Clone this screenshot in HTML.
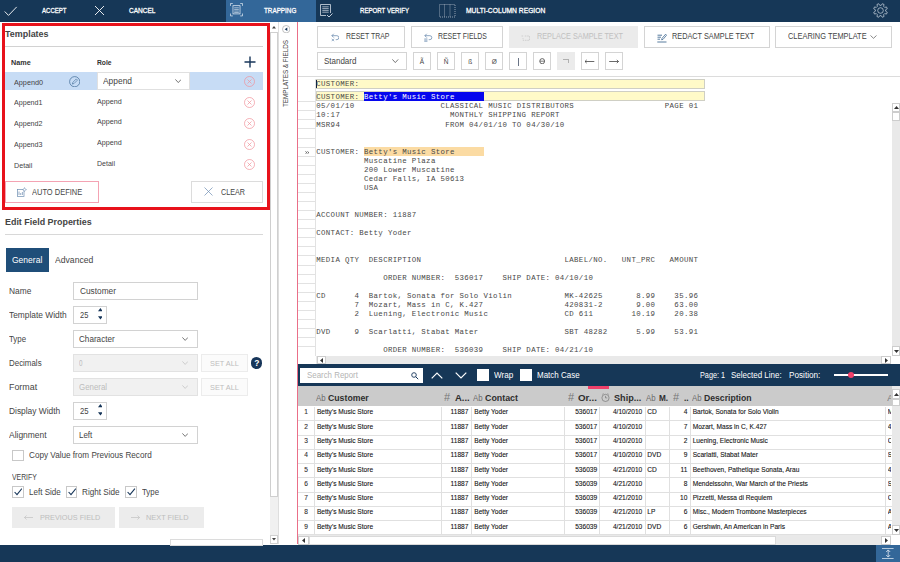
<!DOCTYPE html>
<html>
<head>
<meta charset="utf-8">
<style>
*{box-sizing:border-box;margin:0;padding:0}
html,body{width:900px;height:562px;overflow:hidden;background:#fff}
body{font-family:"Liberation Sans",sans-serif;font-size:9px;color:#333;position:relative}
.a{position:absolute}
.t{position:absolute;white-space:nowrap;line-height:1}
.btn{position:absolute;border:1px solid #d4d4d4;background:#fff}
.mono{font-family:"Liberation Mono",monospace;font-size:8px;color:#222;white-space:pre;line-height:1;position:absolute}
.cell{position:absolute;font-size:6.6px;color:#111;white-space:nowrap;line-height:1;-webkit-text-stroke:0.1px #222}
</style>
</head>
<body>
<div class="a" style="left:0px;top:0px;width:900px;height:21.6px;background:#163757;"></div>
<div class="a" style="left:226px;top:0px;width:90px;height:21.6px;background:#336799;"></div>
<svg class="a" style="left:4px;top:5.5px" width="14" height="10.5" viewBox="0 0 14 10.5"><path d="M0.7 5.5L4.5 9.4L12.7 0.9" stroke="#fff" stroke-width="0.9" fill="none"/></svg>
<div class="t" style="left:42.0px;top:7px;font-size:7.5px;color:#fff;transform:scaleX(0.8053);transform-origin:0 0;-webkit-text-stroke:0.3px #fff;">ACCEPT</div>
<svg class="a" style="left:94px;top:5px" width="11" height="11" viewBox="0 0 11 11"><path d="M1 1L10 10M10 1L1 10" stroke="#fff" stroke-width="0.9" fill="none"/></svg>
<div class="t" style="left:129.0px;top:7px;font-size:7.5px;color:#fff;transform:scaleX(0.8710);transform-origin:0 0;-webkit-text-stroke:0.3px #fff;">CANCEL</div>
<svg class="a" style="left:230px;top:3.3px" width="13" height="13.4" viewBox="0 0 14 14" preserveAspectRatio="none"><path d="M0.5 3V0.5H3M11 0.5H13.5V3M13.5 11V13.5H11M3 13.5H0.5V11" stroke="#dfe8f2" stroke-width="0.8" fill="none"/><rect x="3.2" y="2.8" width="7.6" height="8.6" stroke="#dfe8f2" stroke-width="0.8" fill="none"/><path d="M4.5 5H9.5M4.5 6.7H9.5M4.5 8.4H9.5M4.5 10H9.5" stroke="#dfe8f2" stroke-width="0.7"/></svg>
<div class="t" style="left:264.0px;top:7px;font-size:7.5px;color:#fff;transform:scaleX(0.8425);transform-origin:0 0;-webkit-text-stroke:0.3px #fff;">TRAPPING</div>
<svg class="a" style="left:320px;top:3.5px" width="13" height="14" viewBox="0 0 13 14"><path d="M0.5 0.5H10.5V9M0.5 0.5V11.5H6" stroke="#d5dde6" stroke-width="0.8" fill="none"/><path d="M2.3 2.8H8.7M2.3 4.6H8.7M2.3 6.4H8.7M2.3 8.2H8.7" stroke="#d5dde6" stroke-width="0.7"/><path d="M7 11L9 13L12.5 9.5" stroke="#d5dde6" stroke-width="0.9" fill="none"/></svg>
<div class="t" style="left:360.0px;top:7px;font-size:7.5px;color:#fff;transform:scaleX(0.8146);transform-origin:0 0;-webkit-text-stroke:0.3px #fff;">REPORT VERIFY</div>
<svg class="a" style="left:439px;top:3.5px" width="17" height="14" viewBox="0 0 17 14"><rect x="0.5" y="0.5" width="15.5" height="12.5" stroke="#aeb9c6" stroke-width="0.8" fill="none" stroke-dasharray="1 1"/><path d="M5.5 0.5V13M11 0.5V13" stroke="#aeb9c6" stroke-width="0.8" stroke-dasharray="1 1"/></svg>
<div class="t" style="left:465.7px;top:7px;font-size:7.5px;color:#fff;transform:scaleX(0.8949);transform-origin:0 0;-webkit-text-stroke:0.3px #fff;">MULTI-COLUMN REGION</div>
<svg class="a" style="left:873.2px;top:2.5px" width="15" height="15" viewBox="0 0 15 15"><polygon points="8.23,2.35 9.24,0.72 11.06,1.47 10.62,3.34 11.66,4.38 13.53,3.94 14.28,5.76 12.65,6.77 12.65,8.23 14.28,9.24 13.53,11.06 11.66,10.62 10.62,11.66 11.06,13.53 9.24,14.28 8.23,12.65 6.77,12.65 5.76,14.28 3.94,13.53 4.38,11.66 3.34,10.62 1.47,11.06 0.72,9.24 2.35,8.23 2.35,6.77 0.72,5.76 1.47,3.94 3.34,4.38 4.38,3.34 3.94,1.47 5.76,0.72 6.77,2.35" stroke="#cfd8e2" stroke-width="0.7" fill="none" stroke-linejoin="round"/><circle cx="7.5" cy="7.5" r="2.8" stroke="#cfd8e2" stroke-width="0.7" fill="none"/></svg>
<div class="a" style="left:0px;top:544.6px;width:900px;height:17.4px;background:#163757;"></div>
<div class="a" style="left:876.2px;top:544.6px;width:23.8px;height:17.4px;background:#336799;"></div>
<svg class="a" style="left:882.2px;top:548px" width="11.6" height="11" viewBox="0 0 11.6 11"><path d="M0 0.45H11.6M0 10.55H11.6M6.2 2V9M4.2 4L6.2 1.9L8.2 4M4.2 7L6.2 9.1L8.2 7" stroke="#dfe8f2" stroke-width="0.8" fill="none"/></svg>
<div class="a" style="left:2.3px;top:23px;width:267.7px;height:186.7px;border:3px solid #e8121b;"></div>
<div class="t" style="left:5.0px;top:30px;font-size:9px;color:#444;font-weight:bold;transform:scaleX(0.9920);transform-origin:0 0;">Templates</div>
<div class="a" style="left:5px;top:45.5px;width:258px;height:1px;background:#d2d2d2;"></div>
<div class="t" style="left:11.0px;top:59px;font-size:8px;color:#333;font-weight:bold;transform:scaleX(0.9041);transform-origin:0 0;">Name</div>
<div class="t" style="left:97.0px;top:59px;font-size:8px;color:#333;font-weight:bold;transform:scaleX(0.8364);transform-origin:0 0;">Role</div>
<svg class="a" style="left:243.5px;top:55.5px" width="12" height="12" viewBox="0 0 12 12"><path d="M6 0.5V11.5M0.5 6H11.5" stroke="#17365a" stroke-width="1.4"/></svg>
<div class="a" style="left:5px;top:72px;width:258px;height:18px;background:#c7dcf5;"></div>
<div class="t" style="left:14.0px;top:79px;font-size:8px;color:#444;transform:scaleX(0.9053);transform-origin:0 0;">Append0</div>
<svg class="a" style="left:69px;top:76px" width="11.4" height="11.4" viewBox="0 0 11.4 11.4"><circle cx="5.7" cy="5.7" r="5.1" stroke="#3c6894" stroke-width="0.7" fill="none"/><path d="M3.3 8.1L3.9 6.3L7.3 2.9L8.5 4.1L5.1 7.5z" stroke="#3c6894" stroke-width="0.6" fill="none"/></svg>
<div class="a" style="left:97px;top:72px;width:92.5px;height:18px;background:#fff;border:1px solid #e0e0e0;"></div>
<div class="t" style="left:103.0px;top:77px;font-size:9px;color:#444;transform:scaleX(0.9345);transform-origin:0 0;">Append</div>
<svg class="a" style="left:174.6px;top:79.2px" width="6.6" height="4.2" viewBox="0 0 6.6 4.2"><path d="M0.4 0.4L3.3 3.6L6.2 0.4" stroke="#555" stroke-width="0.8" fill="none"/></svg>
<div class="t" style="left:14.0px;top:99px;font-size:8px;color:#444;transform:scaleX(0.8897);transform-origin:0 0;">Append1</div>
<div class="t" style="left:97.0px;top:98px;font-size:8px;color:#444;transform:scaleX(0.8955);transform-origin:0 0;">Append</div>
<div class="t" style="left:14.0px;top:120px;font-size:8px;color:#444;transform:scaleX(0.8897);transform-origin:0 0;">Append2</div>
<div class="t" style="left:97.0px;top:118px;font-size:8px;color:#444;transform:scaleX(0.8955);transform-origin:0 0;">Append</div>
<div class="t" style="left:14.0px;top:141px;font-size:8px;color:#444;transform:scaleX(0.8897);transform-origin:0 0;">Append3</div>
<div class="t" style="left:97.0px;top:139px;font-size:8px;color:#444;transform:scaleX(0.8955);transform-origin:0 0;">Append</div>
<div class="t" style="left:14.0px;top:162px;font-size:8px;color:#444;transform:scaleX(0.8947);transform-origin:0 0;">Detail</div>
<div class="t" style="left:97.0px;top:160px;font-size:8px;color:#444;transform:scaleX(0.8800);transform-origin:0 0;">Detail</div>
<svg class="a" style="left:244px;top:76px" width="11" height="11" viewBox="0 0 11 11"><circle cx="5.5" cy="5.5" r="5" stroke="#f0909a" stroke-width="0.7" fill="none"/><path d="M3.5 3.5L7.5 7.5M7.5 3.5L3.5 7.5" stroke="#f0909a" stroke-width="0.7"/></svg>
<svg class="a" style="left:244px;top:97px" width="11" height="11" viewBox="0 0 11 11"><circle cx="5.5" cy="5.5" r="5" stroke="#f0909a" stroke-width="0.7" fill="none"/><path d="M3.5 3.5L7.5 7.5M7.5 3.5L3.5 7.5" stroke="#f0909a" stroke-width="0.7"/></svg>
<svg class="a" style="left:244px;top:118px" width="11" height="11" viewBox="0 0 11 11"><circle cx="5.5" cy="5.5" r="5" stroke="#f0909a" stroke-width="0.7" fill="none"/><path d="M3.5 3.5L7.5 7.5M7.5 3.5L3.5 7.5" stroke="#f0909a" stroke-width="0.7"/></svg>
<svg class="a" style="left:244px;top:139px" width="11" height="11" viewBox="0 0 11 11"><circle cx="5.5" cy="5.5" r="5" stroke="#f0909a" stroke-width="0.7" fill="none"/><path d="M3.5 3.5L7.5 7.5M7.5 3.5L3.5 7.5" stroke="#f0909a" stroke-width="0.7"/></svg>
<svg class="a" style="left:244px;top:159px" width="11" height="11" viewBox="0 0 11 11"><circle cx="5.5" cy="5.5" r="5" stroke="#f0909a" stroke-width="0.7" fill="none"/><path d="M3.5 3.5L7.5 7.5M7.5 3.5L3.5 7.5" stroke="#f0909a" stroke-width="0.7"/></svg>
<div class="a" style="left:5px;top:181.2px;width:93.6px;height:21.4px;background:#fff;border:1px solid #f4a3b3;"></div>
<svg class="a" style="left:16.8px;top:187px" width="10" height="10" viewBox="0 0 10 10"><rect x="0.5" y="2.5" width="6.5" height="7" stroke="#6d8db1" stroke-width="0.7" fill="none"/><path d="M2 4.5V8M3.7 6V8M5.4 5V8" stroke="#6d8db1" stroke-width="0.7"/><path d="M7.5 0.5L8.1 2L9.6 2.6L8.1 3.2L7.5 4.7L6.9 3.2L5.4 2.6L6.9 2z" stroke="#6d8db1" stroke-width="0.5" fill="#fff"/></svg>
<div class="t" style="left:32.3px;top:188px;font-size:8.5px;color:#444;transform:scaleX(0.8808);transform-origin:0 0;">AUTO DEFINE</div>
<div class="a" style="left:191px;top:181.2px;width:72px;height:21.4px;background:#fff;border:1px solid #dcdcdc;"></div>
<svg class="a" style="left:204px;top:187px" width="9" height="9" viewBox="0 0 9 9"><path d="M0.5 0.5L8.5 8.5M8.5 0.5L0.5 8.5" stroke="#6d8db1" stroke-width="0.7"/></svg>
<div class="t" style="left:221.3px;top:188px;font-size:8.5px;color:#444;transform:scaleX(0.8467);transform-origin:0 0;">CLEAR</div>
<div class="t" style="left:5.0px;top:218px;font-size:9px;color:#444;font-weight:bold;transform:scaleX(0.9906);transform-origin:0 0;">Edit Field Properties</div>
<div class="a" style="left:5px;top:233.8px;width:258px;height:1px;background:#d8d8d8;"></div>
<div class="a" style="left:6px;top:248.2px;width:42.5px;height:23.5px;background:#1f4e79;"></div>
<div class="t" style="left:12.0px;top:256px;font-size:8.5px;color:#fff;transform:scaleX(1.0020);transform-origin:0 0;">General</div>
<div class="t" style="left:54.7px;top:256px;font-size:8.5px;color:#444;transform:scaleX(1.0130);transform-origin:0 0;">Advanced</div>
<div class="t" style="left:9.0px;top:287px;font-size:8.5px;color:#444;transform:scaleX(0.9835);transform-origin:0 0;">Name</div>
<div class="a" style="left:73px;top:282.2px;width:124.7px;height:17.6px;background:#fff;border:1px solid #d2d2d2;"></div>
<div class="t" style="left:79.7px;top:287px;font-size:8.5px;color:#444;transform:scaleX(0.9771);transform-origin:0 0;">Customer</div>
<div class="t" style="left:9.0px;top:311px;font-size:8.5px;color:#444;transform:scaleX(0.9850);transform-origin:0 0;">Template Width</div>
<div class="a" style="left:73px;top:306.2px;width:33.7px;height:17.6px;background:#fff;border:1px solid #d2d2d2;"></div>
<div class="t" style="left:80.0px;top:311px;font-size:8.5px;color:#444;transform:scaleX(0.8778);transform-origin:0 0;">25</div>
<svg class="a" style="left:97.7px;top:308.4px" width="4.8" height="11.6" viewBox="0 0 4.8 11.6"><path d="M0 3.3L2.4 0L4.8 3.3zM0 8.3L2.4 11.6L4.8 8.3z" fill="#17365a"/></svg>
<div class="t" style="left:9.0px;top:335px;font-size:8.5px;color:#444;transform:scaleX(0.9225);transform-origin:0 0;">Type</div>
<div class="a" style="left:73px;top:330.2px;width:124.7px;height:17.6px;background:#fff;border:1px solid #d2d2d2;"></div>
<div class="t" style="left:79.0px;top:335px;font-size:8.5px;color:#444;transform:scaleX(0.9565);transform-origin:0 0;">Character</div>
<svg class="a" style="left:181.9px;top:337.4px" width="6.4" height="4" viewBox="0 0 6.4 4"><path d="M0.4 0.4L3.2 3.4L6 0.4" stroke="#555" stroke-width="0.8" fill="none"/></svg>
<div class="t" style="left:9.1px;top:359px;font-size:8.5px;color:#444;transform:scaleX(0.9327);transform-origin:0 0;">Decimals</div>
<div class="a" style="left:73px;top:354.1px;width:124.7px;height:17.6px;background:#f1f1f1;border:1px solid #e2e2e2;"></div>
<div class="t" style="left:79.3px;top:359px;font-size:8.5px;color:#bdbdbd;transform:scaleX(0.7404);transform-origin:0 0;">0</div>
<svg class="a" style="left:181.9px;top:361.4px" width="6.4" height="4" viewBox="0 0 6.4 4"><path d="M0.4 0.4L3.2 3.4L6 0.4" stroke="#c4c4c4" stroke-width="0.8" fill="none"/></svg>
<div class="a" style="left:200.8px;top:354.1px;width:47.2px;height:17.6px;background:#fbfbfb;border:1px solid #ececec;"></div>
<div class="t" style="left:210.0px;top:360px;font-size:8px;color:#bdbdbd;transform:scaleX(0.9163);transform-origin:0 0;">SET ALL</div>
<div class="a" style="left:250.8px;top:357px;width:11.6px;height:11.6px;background:#17365a;border-radius:6px"></div>
<div class="t" style="left:254.2px;top:359px;font-size:8.5px;color:#fff;font-weight:bold;">?</div>
<div class="t" style="left:9.1px;top:383px;font-size:8.5px;color:#444;transform:scaleX(1.0438);transform-origin:0 0;">Format</div>
<div class="a" style="left:73px;top:378.1px;width:124.7px;height:17.6px;background:#f1f1f1;border:1px solid #e2e2e2;"></div>
<div class="t" style="left:79.3px;top:383px;font-size:8.5px;color:#bdbdbd;transform:scaleX(0.9292);transform-origin:0 0;">General</div>
<svg class="a" style="left:181.9px;top:385.4px" width="6.4" height="4" viewBox="0 0 6.4 4"><path d="M0.4 0.4L3.2 3.4L6 0.4" stroke="#c4c4c4" stroke-width="0.8" fill="none"/></svg>
<div class="a" style="left:200.8px;top:378.1px;width:47.2px;height:17.6px;background:#fbfbfb;border:1px solid #ececec;"></div>
<div class="t" style="left:210.0px;top:384px;font-size:8px;color:#bdbdbd;transform:scaleX(0.9163);transform-origin:0 0;">SET ALL</div>
<div class="t" style="left:9.1px;top:407px;font-size:8.5px;color:#444;transform:scaleX(0.9854);transform-origin:0 0;">Display Width</div>
<div class="a" style="left:73px;top:402.1px;width:33.7px;height:17.6px;background:#fff;border:1px solid #d2d2d2;"></div>
<div class="t" style="left:79.8px;top:407px;font-size:8.5px;color:#444;transform:scaleX(0.9096);transform-origin:0 0;">25</div>
<svg class="a" style="left:97.7px;top:404.3px" width="4.8" height="11.6" viewBox="0 0 4.8 11.6"><path d="M0 3.3L2.4 0L4.8 3.3zM0 8.3L2.4 11.6L4.8 8.3z" fill="#17365a"/></svg>
<div class="t" style="left:9.1px;top:431px;font-size:8.5px;color:#444;transform:scaleX(0.9947);transform-origin:0 0;">Alignment</div>
<div class="a" style="left:73px;top:426px;width:124.7px;height:17.6px;background:#fff;border:1px solid #d2d2d2;"></div>
<div class="t" style="left:79.3px;top:431px;font-size:8.5px;color:#444;transform:scaleX(0.9381);transform-origin:0 0;">Left</div>
<svg class="a" style="left:181.9px;top:433.2px" width="6.4" height="4" viewBox="0 0 6.4 4"><path d="M0.4 0.4L3.2 3.4L6 0.4" stroke="#555" stroke-width="0.8" fill="none"/></svg>
<div class="a" style="left:12px;top:449.5px;width:11.6px;height:11.6px;background:#fff;border:1px solid #c8c8c8;"></div>
<div class="t" style="left:28.5px;top:451px;font-size:8.5px;color:#444;transform:scaleX(0.9595);transform-origin:0 0;">Copy Value from Previous Record</div>
<div class="t" style="left:12.1px;top:474px;font-size:8.2px;color:#444;transform:scaleX(0.8373);transform-origin:0 0;">VERIFY</div>
<div class="a" style="left:12px;top:486px;width:11.6px;height:11.6px;background:#fff;border:1px solid #c8c8c8;"></div>
<svg class="a" style="left:13.8px;top:488.2px" width="8.5" height="7.5" viewBox="0 0 8.5 7.5"><path d="M0.6 4L3 6.6L7.9 0.6" stroke="#17365a" stroke-width="1.1" fill="none"/></svg>
<div class="t" style="left:28.5px;top:488px;font-size:8.5px;color:#444;transform:scaleX(0.9478);transform-origin:0 0;">Left Side</div>
<div class="a" style="left:65.7px;top:486px;width:11.6px;height:11.6px;background:#fff;border:1px solid #c8c8c8;"></div>
<svg class="a" style="left:67.5px;top:488.2px" width="8.5" height="7.5" viewBox="0 0 8.5 7.5"><path d="M0.6 4L3 6.6L7.9 0.6" stroke="#17365a" stroke-width="1.1" fill="none"/></svg>
<div class="t" style="left:81.8px;top:488px;font-size:8.5px;color:#444;transform:scaleX(0.9587);transform-origin:0 0;">Right Side</div>
<div class="a" style="left:125.4px;top:486px;width:11.6px;height:11.6px;background:#fff;border:1px solid #c8c8c8;"></div>
<svg class="a" style="left:127.2px;top:488.2px" width="8.5" height="7.5" viewBox="0 0 8.5 7.5"><path d="M0.6 4L3 6.6L7.9 0.6" stroke="#17365a" stroke-width="1.1" fill="none"/></svg>
<div class="t" style="left:142.1px;top:488px;font-size:8.5px;color:#444;transform:scaleX(0.9225);transform-origin:0 0;">Type</div>
<div class="a" style="left:12px;top:507.2px;width:103.3px;height:20.8px;background:#ececec;"></div>
<svg class="a" style="left:24px;top:514.5px" width="9" height="5" viewBox="0 0 9 5"><path d="M0.5 2.5H9M2.5 0.5L0.5 2.5L2.5 4.5" stroke="#c2c2c2" stroke-width="0.7" fill="none"/></svg>
<div class="t" style="left:39.7px;top:514px;font-size:8px;color:#bdbdbd;transform:scaleX(0.9103);transform-origin:0 0;">PREVIOUS FIELD</div>
<div class="a" style="left:118.5px;top:507.2px;width:85.7px;height:20.8px;background:#ececec;"></div>
<svg class="a" style="left:131.4px;top:514.5px" width="9" height="5" viewBox="0 0 9 5"><path d="M0 2.5H8.5M6.5 0.5L8.5 2.5L6.5 4.5" stroke="#c2c2c2" stroke-width="0.7" fill="none"/></svg>
<div class="t" style="left:146.3px;top:514px;font-size:8px;color:#bdbdbd;transform:scaleX(0.9222);transform-origin:0 0;">NEXT FIELD</div>
<div class="a" style="left:170.3px;top:538.5px;width:92.5px;height:7px;background:#fff;border:1px solid #dcdcdc;"></div>
<div class="a" style="left:270.3px;top:21.6px;width:7.7px;height:522.7px;background:#f0f0f0;"></div>
<div class="a" style="left:270.3px;top:32px;width:7.7px;height:464.5px;background:#fff;border:1px solid #cfcfcf;"></div>
<div class="a" style="left:270.3px;top:22px;width:7.7px;height:10px;background:#fff;"></div>
<svg class="a" style="left:272.2px;top:26px" width="4" height="2.6" viewBox="0 0 4 2.6"><path d="M0 2.6L2 0L4 2.6z" fill="#444"/></svg>
<div class="a" style="left:270.3px;top:534.5px;width:7.7px;height:9.8px;background:#fff;border:1px solid #d0d0d0;"></div>
<svg class="a" style="left:272.2px;top:538px" width="4" height="2.6" viewBox="0 0 4 2.6"><path d="M0 0L2 2.6L4 0z" fill="#444"/></svg>
<div class="a" style="left:278px;top:21.6px;width:1px;height:522.7px;background:#dedede;"></div>
<svg class="a" style="left:281.8px;top:24.7px" width="8.4" height="8.4" viewBox="0 0 8.4 8.4"><circle cx="4.2" cy="4.2" r="3.7" stroke="#9a9a9a" stroke-width="0.6" fill="#fff"/><path d="M5.3 2.4L2.7 4.2L5.3 6z" fill="#17365a"/></svg>
<div class="t" style="left:282.1px;top:107px;font-size:7.5px;color:#444;transform:rotate(-90deg) scaleX(0.8431);transform-origin:0 0">TEMPLATES &amp; FIELDS</div>
<div class="a" style="left:297.2px;top:21.6px;width:1px;height:522.7px;background:#ea6f88;"></div>
<div class="btn" style="left:317.4px;top:26.4px;width:87.3px;height:21.5px;"></div>
<div class="btn" style="left:411px;top:26.4px;width:92px;height:21.5px;"></div>
<div class="a" style="left:509.4px;top:26.4px;width:128.5px;height:21.5px;background:#ebebeb;"></div>
<div class="btn" style="left:644px;top:26.4px;width:125.5px;height:21.5px;"></div>
<div class="btn" style="left:775.2px;top:26.4px;width:116.4px;height:21.5px;"></div>
<svg class="a" style="left:330.6px;top:32.8px" width="8.6" height="8.8" viewBox="0 0 10 10"><path d="M3.2 0.8L1 3L3.2 5.2M1 3H6.8A2.3 2.3 0 0 1 6.8 7.6H5.5" stroke="#5a7ea6" stroke-width="0.8" fill="none"/><path d="M0.8 6.6L3.6 9.4M3.6 6.6L0.8 9.4" stroke="#5a7ea6" stroke-width="0.7"/></svg>
<div class="t" style="left:345.6px;top:32px;font-size:8.5px;color:#444;transform:scaleX(0.8197);transform-origin:0 0;">RESET TRAP</div>
<svg class="a" style="left:424.2px;top:32.8px" width="8.6" height="8.8" viewBox="0 0 10 10"><path d="M3.2 0.8L1 3L3.2 5.2M1 3H6.8A2.3 2.3 0 0 1 6.8 7.6H5.5" stroke="#5a7ea6" stroke-width="0.8" fill="none"/><path d="M0.3 6.8H4M0.3 8.2H4M0.3 9.6H4" stroke="#5a7ea6" stroke-width="0.7"/></svg>
<div class="t" style="left:438.2px;top:32px;font-size:8.5px;color:#444;transform:scaleX(0.8108);transform-origin:0 0;">RESET FIELDS</div>
<svg class="a" style="left:521px;top:33.5px" width="10" height="8" viewBox="0 0 10 8"><path d="M0.5 2H2.5M3.8 2H8.5V6.3H2V4.2" stroke="#c8c8c8" stroke-width="0.8" fill="none" stroke-dasharray="1.6 0.8"/></svg>
<div class="t" style="left:536.7px;top:32px;font-size:8.5px;color:#c0c0c0;transform:scaleX(0.8560);transform-origin:0 0;">REPLACE SAMPLE TEXT</div>
<svg class="a" style="left:656.5px;top:32.5px" width="10" height="10" viewBox="0 0 10 10"><path d="M0.5 2.2H5M0.5 4.2H4M0.5 6.2H3M0.3 9H9.5" stroke="#2d5a87" stroke-width="0.8"/><path d="M4.6 6.8L5 5.4L8.6 1.2L9.6 2.2L6 6.4z" stroke="#2d5a87" stroke-width="0.7" fill="none"/></svg>
<div class="t" style="left:671.7px;top:32px;font-size:8.5px;color:#444;transform:scaleX(0.8601);transform-origin:0 0;">REDACT SAMPLE TEXT</div>
<div class="t" style="left:788.0px;top:32px;font-size:8.5px;color:#444;transform:scaleX(0.8743);transform-origin:0 0;">CLEARING TEMPLATE</div>
<svg class="a" style="left:869.5px;top:35.3px" width="7" height="4" viewBox="0 0 7 4"><path d="M0.5 0.5L3.5 3.3L6.5 0.5" stroke="#555" stroke-width="0.7" fill="none"/></svg>
<div class="btn" style="left:317.4px;top:52.4px;width:89.6px;height:17.4px;"></div>
<div class="t" style="left:323.6px;top:57px;font-size:8.5px;color:#444;transform:scaleX(0.9391);transform-origin:0 0;">Standard</div>
<svg class="a" style="left:392px;top:58.8px" width="6.6" height="4.2" viewBox="0 0 6.6 4.2"><path d="M0.4 0.4L3.3 3.6L6.2 0.4" stroke="#555" stroke-width="0.8" fill="none"/></svg>
<div class="btn" style="left:413.2px;top:52.4px;width:17.7px;height:17.4px;"></div>
<div class="t" style="left:413.2px;top:59px;width:17.7px;text-align:center;font-size:6.5px;color:#444">&#195;</div>
<div class="btn" style="left:437.3px;top:52.4px;width:17.7px;height:17.4px;"></div>
<div class="t" style="left:437.3px;top:59px;width:17.7px;text-align:center;font-size:6.5px;color:#444">&#209;</div>
<div class="btn" style="left:461.4px;top:52.4px;width:17.7px;height:17.4px;"></div>
<div class="t" style="left:461.4px;top:59px;width:17.7px;text-align:center;font-size:6.5px;color:#444">&#223;</div>
<div class="btn" style="left:485.4px;top:52.4px;width:17.7px;height:17.4px;"></div>
<div class="t" style="left:485.4px;top:59px;width:17.7px;text-align:center;font-size:6.5px;color:#444">&#216;</div>
<div class="btn" style="left:509.3px;top:52.4px;width:17.7px;height:17.4px;"></div>
<div class="a" style="left:517.6px;top:58px;width:1px;height:7.5px;background:#6a7486;"></div>
<div class="btn" style="left:533.3px;top:52.4px;width:17.7px;height:17.4px;"></div>
<svg class="a" style="left:538.9px;top:58px" width="6.4" height="6.4" viewBox="0 0 6.4 6.4"><ellipse cx="3.2" cy="3.2" rx="2.4" ry="2.6" stroke="#444" stroke-width="0.8" fill="none"/><path d="M0.8 3.2H5.6" stroke="#444" stroke-width="0.7"/></svg>
<div class="a" style="left:557.1px;top:52.4px;width:17.6px;height:17.4px;background:#ebebeb;"></div>
<div class="a" style="left:563.1px;top:59.3px;width:6px;height:4px;border-top:1px solid #b0b0b0;border-right:1px solid #b0b0b0"></div>
<div class="btn" style="left:580.7px;top:52.4px;width:18.2px;height:17.4px;"></div>
<svg class="a" style="left:584.3000000000001px;top:57.6px" width="12" height="7" viewBox="0 0 12 7"><path d="M1 3.5H10.3M2.7 1.9L1 3.5L2.7 5.1" stroke="#444" stroke-width="0.8" fill="none"/></svg>
<div class="btn" style="left:604.5px;top:52.4px;width:18.2px;height:17.4px;"></div>
<svg class="a" style="left:608.1px;top:57.6px" width="12" height="7" viewBox="0 0 12 7"><path d="M1.2 3.5H10.5M8.8 1.9L10.5 3.5L8.8 5.1" stroke="#444" stroke-width="0.8" fill="none"/></svg>
<div class="a" style="left:298px;top:76px;width:602px;height:1px;background:#dcdcdc;"></div>
<div class="a" style="left:315.2px;top:79px;width:1px;height:277px;background:#e2e2e2;"></div>
<div class="a" style="left:298px;top:101.0px;width:17.2px;height:1px;background:#e2e2e2;"></div>
<div class="a" style="left:298px;top:110.0px;width:17.2px;height:1px;background:#e2e2e2;"></div>
<div class="a" style="left:298px;top:119.0px;width:17.2px;height:1px;background:#e2e2e2;"></div>
<div class="a" style="left:298px;top:128.0px;width:17.2px;height:1px;background:#e2e2e2;"></div>
<div class="a" style="left:298px;top:137.5px;width:17.2px;height:1px;background:#e2e2e2;"></div>
<div class="a" style="left:298px;top:146.5px;width:17.2px;height:1px;background:#e2e2e2;"></div>
<div class="a" style="left:298px;top:155.5px;width:17.2px;height:1px;background:#e2e2e2;"></div>
<div class="a" style="left:298px;top:164.5px;width:17.2px;height:1px;background:#e2e2e2;"></div>
<div class="a" style="left:298px;top:173.5px;width:17.2px;height:1px;background:#e2e2e2;"></div>
<div class="a" style="left:298px;top:182.5px;width:17.2px;height:1px;background:#e2e2e2;"></div>
<div class="a" style="left:298px;top:191.5px;width:17.2px;height:1px;background:#e2e2e2;"></div>
<div class="a" style="left:298px;top:201.0px;width:17.2px;height:1px;background:#e2e2e2;"></div>
<div class="a" style="left:298px;top:210.0px;width:17.2px;height:1px;background:#e2e2e2;"></div>
<div class="a" style="left:298px;top:219.0px;width:17.2px;height:1px;background:#e2e2e2;"></div>
<div class="a" style="left:298px;top:228.0px;width:17.2px;height:1px;background:#e2e2e2;"></div>
<div class="a" style="left:298px;top:237.0px;width:17.2px;height:1px;background:#e2e2e2;"></div>
<div class="a" style="left:298px;top:246.0px;width:17.2px;height:1px;background:#e2e2e2;"></div>
<div class="a" style="left:298px;top:255.0px;width:17.2px;height:1px;background:#e2e2e2;"></div>
<div class="a" style="left:298px;top:264.5px;width:17.2px;height:1px;background:#e2e2e2;"></div>
<div class="a" style="left:298px;top:273.5px;width:17.2px;height:1px;background:#e2e2e2;"></div>
<div class="a" style="left:298px;top:282.5px;width:17.2px;height:1px;background:#e2e2e2;"></div>
<div class="a" style="left:298px;top:291.5px;width:17.2px;height:1px;background:#e2e2e2;"></div>
<div class="a" style="left:298px;top:300.5px;width:17.2px;height:1px;background:#e2e2e2;"></div>
<div class="a" style="left:298px;top:309.5px;width:17.2px;height:1px;background:#e2e2e2;"></div>
<div class="a" style="left:298px;top:318.5px;width:17.2px;height:1px;background:#e2e2e2;"></div>
<div class="a" style="left:298px;top:328.0px;width:17.2px;height:1px;background:#e2e2e2;"></div>
<div class="a" style="left:298px;top:337.0px;width:17.2px;height:1px;background:#e2e2e2;"></div>
<div class="a" style="left:298px;top:346.0px;width:17.2px;height:1px;background:#e2e2e2;"></div>
<svg class="a" style="left:304.8px;top:150.8px" width="4.4" height="3.2" viewBox="0 0 4.4 3.2"><path d="M0.4 0.3L1.8 1.6L0.4 2.9M2.4 0.3L3.8 1.6L2.4 2.9" stroke="#222" stroke-width="0.7" fill="none"/></svg>
<div class="a" style="left:316px;top:79.3px;width:388.7px;height:9.6px;background:#fffac8;border:1px solid #cfcfc4;"></div>
<div class="a" style="left:316px;top:91.3px;width:388.7px;height:10px;background:#fffac8;border:1px solid #cfcfc4;"></div>
<div class="a" style="left:364px;top:92px;width:120px;height:8.9px;background:#0606ee;"></div>
<div class="a" style="left:316px;top:79.6px;width:1px;height:8.8px;background:#102040;"></div>
<div class="a" style="left:363.8px;top:147.3px;width:120.2px;height:8.5px;background:#fbdba3;"></div>
<div class="mono" style="left:316.3px;top:81px;color:#484848;font-size:7.4px;letter-spacing:0.339px">CUSTOMER:</div>
<div class="mono" style="left:316.3px;top:94px;color:#484848;font-size:7.4px;letter-spacing:0.339px">CUSTOMER: <span style="color:#fff">Betty's Music Store</span></div>
<div class="mono" style="left:316.3px;top:103px;color:#484848;font-size:7.4px;letter-spacing:0.339px">05/01/10                  CLASSICAL MUSIC DISTRIBUTORS                   PAGE 01</div>
<div class="mono" style="left:316.3px;top:112px;color:#484848;font-size:7.4px;letter-spacing:0.339px">10:17                       MONTHLY SHIPPING REPORT</div>
<div class="mono" style="left:316.3px;top:122px;color:#484848;font-size:7.4px;letter-spacing:0.339px">MSR94                      FROM 04/01/10 TO 04/30/10</div>
<div class="mono" style="left:316.3px;top:149px;color:#484848;font-size:7.4px;letter-spacing:0.339px">CUSTOMER: Betty's Music Store</div>
<div class="mono" style="left:316.3px;top:158px;color:#484848;font-size:7.4px;letter-spacing:0.339px">          Muscatine Plaza</div>
<div class="mono" style="left:316.3px;top:167px;color:#484848;font-size:7.4px;letter-spacing:0.339px">          200 Lower Muscatine</div>
<div class="mono" style="left:316.3px;top:176px;color:#484848;font-size:7.4px;letter-spacing:0.339px">          Cedar Falls, IA 50613</div>
<div class="mono" style="left:316.3px;top:185px;color:#484848;font-size:7.4px;letter-spacing:0.339px">          USA</div>
<div class="mono" style="left:316.3px;top:212px;color:#484848;font-size:7.4px;letter-spacing:0.339px">ACCOUNT NUMBER: 11887</div>
<div class="mono" style="left:316.3px;top:230px;color:#484848;font-size:7.4px;letter-spacing:0.339px">CONTACT: Betty Yoder</div>
<div class="mono" style="left:316.3px;top:257px;color:#484848;font-size:7.4px;letter-spacing:0.339px">MEDIA QTY  DESCRIPTION                              LABEL/NO.   UNT_PRC   AMOUNT</div>
<div class="mono" style="left:316.3px;top:275px;color:#484848;font-size:7.4px;letter-spacing:0.339px">              ORDER NUMBER:  536017    SHIP DATE: 04/10/10</div>
<div class="mono" style="left:316.3px;top:293px;color:#484848;font-size:7.4px;letter-spacing:0.339px">CD      4  Bartok, Sonata for Solo Violin           MK-42625       8.99    35.96</div>
<div class="mono" style="left:316.3px;top:302px;color:#484848;font-size:7.4px;letter-spacing:0.339px">        7  Mozart, Mass in C, K.427                 420831-2       9.00    63.00</div>
<div class="mono" style="left:316.3px;top:311px;color:#484848;font-size:7.4px;letter-spacing:0.339px">        2  Luening, Electronic Music                CD 611        10.19    20.38</div>
<div class="mono" style="left:316.3px;top:329px;color:#484848;font-size:7.4px;letter-spacing:0.339px">DVD     9  Scarlatti, Stabat Mater                  SBT 48282      5.99    53.91</div>
<div class="mono" style="left:316.3px;top:347px;color:#484848;font-size:7.4px;letter-spacing:0.339px">              ORDER NUMBER:  536039    SHIP DATE: 04/21/10</div>
<div class="a" style="left:891.5px;top:103px;width:8.5px;height:253px;background:#e9e9e9;"></div>
<div class="a" style="left:891.5px;top:103px;width:8.5px;height:9px;background:#fff;border:1px solid #cdcdcd;"></div>
<svg class="a" style="left:893.5px;top:106px" width="5" height="3" viewBox="0 0 5 3"><path d="M0 3L2.5 0L5 3z" fill="#333"/></svg>
<div class="a" style="left:891.5px;top:112px;width:8.5px;height:9px;background:#fff;border:1px solid #cdcdcd;"></div>
<div class="a" style="left:891.5px;top:346px;width:8.5px;height:10px;background:#fff;border:1px solid #cdcdcd;"></div>
<svg class="a" style="left:893.5px;top:350px" width="5" height="3" viewBox="0 0 5 3"><path d="M0 0L2.5 3L5 0z" fill="#333"/></svg>
<div class="a" style="left:316px;top:356.2px;width:584px;height:8.2px;background:#e9e9e9;"></div>
<div class="a" style="left:316.5px;top:356.2px;width:9.5px;height:8.2px;background:#fff;border:1px solid #cdcdcd;"></div>
<svg class="a" style="left:319.8px;top:358px" width="3" height="5" viewBox="0 0 3 5"><path d="M3 0L0 2.5L3 5z" fill="#333"/></svg>
<div class="a" style="left:881px;top:356.2px;width:10px;height:8.2px;background:#fff;border:1px solid #cdcdcd;"></div>
<svg class="a" style="left:884.7px;top:358px" width="3" height="5" viewBox="0 0 3 5"><path d="M0 0L3 2.5L0 5z" fill="#333"/></svg>
<div class="a" style="left:891px;top:356.2px;width:9px;height:8.2px;background:#fff;"></div>
<div class="a" style="left:298px;top:364.4px;width:602px;height:21.8px;background:#163757;"></div>
<div class="a" style="left:300.4px;top:367.9px;width:123px;height:15px;background:#fff;"></div>
<div class="t" style="left:306.7px;top:371px;font-size:8.5px;color:#b4b4b4;transform:scaleX(0.9287);transform-origin:0 0;">Search Report</div>
<svg class="a" style="left:411px;top:372px" width="8" height="8" viewBox="0 0 8 8"><circle cx="3" cy="3" r="2.3" stroke="#17365a" stroke-width="0.9" fill="none"/><path d="M4.7 4.7L7.2 7.2" stroke="#17365a" stroke-width="1"/></svg>
<svg class="a" style="left:431px;top:371.7px" width="12" height="7" viewBox="0 0 12 7"><path d="M0.7 6.3L6 1L11.3 6.3" stroke="#fff" stroke-width="1.2" fill="none"/></svg>
<svg class="a" style="left:455px;top:371.7px" width="12" height="7" viewBox="0 0 12 7"><path d="M0.7 0.7L6 6L11.3 0.7" stroke="#fff" stroke-width="1.2" fill="none"/></svg>
<div class="a" style="left:477px;top:369.4px;width:12px;height:11.6px;background:#fff;"></div>
<div class="t" style="left:494.0px;top:371px;font-size:9px;color:#fff;transform:scaleX(0.9044);transform-origin:0 0;">Wrap</div>
<div class="a" style="left:520px;top:369.4px;width:11.8px;height:11.6px;background:#fff;"></div>
<div class="t" style="left:536.7px;top:371px;font-size:9px;color:#fff;transform:scaleX(0.8871);transform-origin:0 0;">Match Case</div>
<div class="t" style="left:699.6px;top:371px;font-size:8.5px;color:#fff;transform:scaleX(0.8566);transform-origin:0 0;">Page: 1</div>
<div class="t" style="left:730.9px;top:371px;font-size:8.5px;color:#fff;transform:scaleX(0.9392);transform-origin:0 0;">Selected Line:</div>
<div class="t" style="left:789.3px;top:371px;font-size:8.5px;color:#fff;transform:scaleX(0.9601);transform-origin:0 0;">Position:</div>
<div class="a" style="left:834px;top:374.2px;width:54px;height:1.8px;background:#fff;"></div>
<div class="a" style="left:848px;top:372px;width:6.4px;height:6.4px;background:#f0406a;border-radius:3.2px"></div>
<div class="a" style="left:298px;top:386.2px;width:602px;height:20.3px;background:#cbcbcb;"></div>
<div class="a" style="left:588.4px;top:386.2px;width:21px;height:2.6px;background:#f0406a;"></div>
<div class="t" style="left:315.7px;top:394px;font-size:9px;color:#6c6c6c;transform:scaleX(0.8720);transform-origin:0 0;">Ab</div>
<div class="t" style="left:328.0px;top:394px;font-size:9px;color:#2e2e2e;font-weight:bold;transform:scaleX(0.9689);transform-origin:0 0;">Customer</div>
<div class="t" style="left:444.4px;top:393px;font-size:10px;color:#787878;transform:scaleX(1.0968);transform-origin:0 0;">#</div>
<div class="t" style="left:455.3px;top:394px;font-size:9px;color:#2e2e2e;font-weight:bold;transform:scaleX(1.0500);transform-origin:0 0;">A...</div>
<div class="t" style="left:472.7px;top:394px;font-size:9px;color:#6c6c6c;transform:scaleX(0.8720);transform-origin:0 0;">Ab</div>
<div class="t" style="left:485.0px;top:394px;font-size:9px;color:#2e2e2e;font-weight:bold;transform:scaleX(0.9850);transform-origin:0 0;">Contact</div>
<div class="t" style="left:567.8px;top:393px;font-size:10px;color:#787878;transform:scaleX(1.0968);transform-origin:0 0;">#</div>
<div class="t" style="left:578.4px;top:394px;font-size:9px;color:#2e2e2e;font-weight:bold;transform:scaleX(1.0796);transform-origin:0 0;">Or...</div>
<svg class="a" style="left:601.3px;top:393.2px" width="9" height="9" viewBox="0 0 9 9"><circle cx="4.5" cy="4.9" r="3.6" stroke="#6a6a6a" stroke-width="0.6" fill="none"/><path d="M4.5 2.9V4.9H6.2M1.4 1.3L2.5 0.6M7.6 1.3L6.5 0.6" stroke="#6a6a6a" stroke-width="0.6" fill="none"/></svg>
<div class="t" style="left:614.0px;top:394px;font-size:9px;color:#2e2e2e;font-weight:bold;transform:scaleX(1.0111);transform-origin:0 0;">Ship...</div>
<div class="t" style="left:646.2px;top:394px;font-size:9px;color:#6c6c6c;transform:scaleX(0.8720);transform-origin:0 0;">Ab</div>
<div class="t" style="left:658.9px;top:394px;font-size:9px;color:#2e2e2e;font-weight:bold;transform:scaleX(0.9102);transform-origin:0 0;">M.</div>
<div class="t" style="left:673.3px;top:393px;font-size:10px;color:#787878;transform:scaleX(1.0968);transform-origin:0 0;">#</div>
<div class="t" style="left:683.6px;top:394px;font-size:9px;color:#2e2e2e;font-weight:bold;transform:scaleX(0.9399);transform-origin:0 0;">..</div>
<div class="t" style="left:691.7px;top:394px;font-size:9px;color:#6c6c6c;transform:scaleX(0.8720);transform-origin:0 0;">Ab</div>
<div class="t" style="left:704.0px;top:394px;font-size:9px;color:#2e2e2e;font-weight:bold;transform:scaleX(0.9614);transform-origin:0 0;">Description</div>
<div class="a" style="left:887.3px;top:390px;width:4.2px;height:14px;overflow:hidden"><div class="t" style="left:0;top:4px;font-size:9px;color:#787878">A</div></div>
<div class="a" style="left:298px;top:406.5px;width:593.5px;height:129px;background:#fff;"></div>
<div class="cell" style="left:298px;width:16px;text-align:center;color:#333;top:409px">1</div>
<div class="cell" style="left:316.9px;top:409px">Betty's Music Store</div>
<div class="cell" style="left:441px;width:27.4px;text-align:right;top:409px">11887</div>
<div class="cell" style="left:474.3px;top:409px">Betty Yoder</div>
<div class="cell" style="left:564px;width:33.2px;text-align:right;top:409px">536017</div>
<div class="cell" style="left:599px;width:43.3px;text-align:right;top:409px">4/10/2010</div>
<div class="cell" style="left:647.3px;top:409px">CD</div>
<div class="cell" style="left:669px;width:18.4px;text-align:right;top:409px">4</div>
<div class="cell" style="left:692.7px;top:409px">Bartok, Sonata for Solo Violin</div>
<div class="cell" style="left:887.8px;width:3.6px;overflow:hidden;top:409px">M</div>
<div class="a" style="left:298px;top:420.0px;width:593.5px;height:1px;background:#e0e0e0;"></div>
<div class="cell" style="left:298px;width:16px;text-align:center;color:#333;top:424px">2</div>
<div class="cell" style="left:316.9px;top:424px">Betty's Music Store</div>
<div class="cell" style="left:441px;width:27.4px;text-align:right;top:424px">11887</div>
<div class="cell" style="left:474.3px;top:424px">Betty Yoder</div>
<div class="cell" style="left:564px;width:33.2px;text-align:right;top:424px">536017</div>
<div class="cell" style="left:599px;width:43.3px;text-align:right;top:424px">4/10/2010</div>
<div class="cell" style="left:647.3px;top:424px"></div>
<div class="cell" style="left:669px;width:18.4px;text-align:right;top:424px">7</div>
<div class="cell" style="left:692.7px;top:424px">Mozart, Mass in C, K.427</div>
<div class="cell" style="left:887.8px;width:3.6px;overflow:hidden;top:424px">4</div>
<div class="a" style="left:298px;top:434.5px;width:593.5px;height:1px;background:#e0e0e0;"></div>
<div class="cell" style="left:298px;width:16px;text-align:center;color:#333;top:438px">3</div>
<div class="cell" style="left:316.9px;top:438px">Betty's Music Store</div>
<div class="cell" style="left:441px;width:27.4px;text-align:right;top:438px">11887</div>
<div class="cell" style="left:474.3px;top:438px">Betty Yoder</div>
<div class="cell" style="left:564px;width:33.2px;text-align:right;top:438px">536017</div>
<div class="cell" style="left:599px;width:43.3px;text-align:right;top:438px">4/10/2010</div>
<div class="cell" style="left:647.3px;top:438px"></div>
<div class="cell" style="left:669px;width:18.4px;text-align:right;top:438px">2</div>
<div class="cell" style="left:692.7px;top:438px">Luening, Electronic Music</div>
<div class="cell" style="left:887.8px;width:3.6px;overflow:hidden;top:438px">C</div>
<div class="a" style="left:298px;top:448.5px;width:593.5px;height:1px;background:#e0e0e0;"></div>
<div class="cell" style="left:298px;width:16px;text-align:center;color:#333;top:452px">4</div>
<div class="cell" style="left:316.9px;top:452px">Betty's Music Store</div>
<div class="cell" style="left:441px;width:27.4px;text-align:right;top:452px">11887</div>
<div class="cell" style="left:474.3px;top:452px">Betty Yoder</div>
<div class="cell" style="left:564px;width:33.2px;text-align:right;top:452px">536017</div>
<div class="cell" style="left:599px;width:43.3px;text-align:right;top:452px">4/10/2010</div>
<div class="cell" style="left:647.3px;top:452px">DVD</div>
<div class="cell" style="left:669px;width:18.4px;text-align:right;top:452px">9</div>
<div class="cell" style="left:692.7px;top:452px">Scarlatti, Stabat Mater</div>
<div class="cell" style="left:887.8px;width:3.6px;overflow:hidden;top:452px">S</div>
<div class="a" style="left:298px;top:463.0px;width:593.5px;height:1px;background:#e0e0e0;"></div>
<div class="cell" style="left:298px;width:16px;text-align:center;color:#333;top:467px">5</div>
<div class="cell" style="left:316.9px;top:467px">Betty's Music Store</div>
<div class="cell" style="left:441px;width:27.4px;text-align:right;top:467px">11887</div>
<div class="cell" style="left:474.3px;top:467px">Betty Yoder</div>
<div class="cell" style="left:564px;width:33.2px;text-align:right;top:467px">536039</div>
<div class="cell" style="left:599px;width:43.3px;text-align:right;top:467px">4/21/2010</div>
<div class="cell" style="left:647.3px;top:467px">CD</div>
<div class="cell" style="left:669px;width:18.4px;text-align:right;top:467px">11</div>
<div class="cell" style="left:692.7px;top:467px">Beethoven, Pathetique Sonata, Arau</div>
<div class="cell" style="left:887.8px;width:3.6px;overflow:hidden;top:467px">4</div>
<div class="a" style="left:298px;top:477.0px;width:593.5px;height:1px;background:#e0e0e0;"></div>
<div class="cell" style="left:298px;width:16px;text-align:center;color:#333;top:481px">6</div>
<div class="cell" style="left:316.9px;top:481px">Betty's Music Store</div>
<div class="cell" style="left:441px;width:27.4px;text-align:right;top:481px">11887</div>
<div class="cell" style="left:474.3px;top:481px">Betty Yoder</div>
<div class="cell" style="left:564px;width:33.2px;text-align:right;top:481px">536039</div>
<div class="cell" style="left:599px;width:43.3px;text-align:right;top:481px">4/21/2010</div>
<div class="cell" style="left:647.3px;top:481px"></div>
<div class="cell" style="left:669px;width:18.4px;text-align:right;top:481px">8</div>
<div class="cell" style="left:692.7px;top:481px">Mendelssohn, War March of the Priests</div>
<div class="cell" style="left:887.8px;width:3.6px;overflow:hidden;top:481px">S</div>
<div class="a" style="left:298px;top:491.5px;width:593.5px;height:1px;background:#e0e0e0;"></div>
<div class="cell" style="left:298px;width:16px;text-align:center;color:#333;top:495px">7</div>
<div class="cell" style="left:316.9px;top:495px">Betty's Music Store</div>
<div class="cell" style="left:441px;width:27.4px;text-align:right;top:495px">11887</div>
<div class="cell" style="left:474.3px;top:495px">Betty Yoder</div>
<div class="cell" style="left:564px;width:33.2px;text-align:right;top:495px">536039</div>
<div class="cell" style="left:599px;width:43.3px;text-align:right;top:495px">4/21/2010</div>
<div class="cell" style="left:647.3px;top:495px"></div>
<div class="cell" style="left:669px;width:18.4px;text-align:right;top:495px">10</div>
<div class="cell" style="left:692.7px;top:495px">Pizzetti, Messa di Requiem</div>
<div class="cell" style="left:887.8px;width:3.6px;overflow:hidden;top:495px">C</div>
<div class="a" style="left:298px;top:505.5px;width:593.5px;height:1px;background:#e0e0e0;"></div>
<div class="cell" style="left:298px;width:16px;text-align:center;color:#333;top:509px">8</div>
<div class="cell" style="left:316.9px;top:509px">Betty's Music Store</div>
<div class="cell" style="left:441px;width:27.4px;text-align:right;top:509px">11887</div>
<div class="cell" style="left:474.3px;top:509px">Betty Yoder</div>
<div class="cell" style="left:564px;width:33.2px;text-align:right;top:509px">536039</div>
<div class="cell" style="left:599px;width:43.3px;text-align:right;top:509px">4/21/2010</div>
<div class="cell" style="left:647.3px;top:509px">LP</div>
<div class="cell" style="left:669px;width:18.4px;text-align:right;top:509px">6</div>
<div class="cell" style="left:692.7px;top:509px">Misc., Modern Trombone Masterpieces</div>
<div class="cell" style="left:887.8px;width:3.6px;overflow:hidden;top:509px">A</div>
<div class="a" style="left:298px;top:520.0px;width:593.5px;height:1px;background:#e0e0e0;"></div>
<div class="cell" style="left:298px;width:16px;text-align:center;color:#333;top:524px">9</div>
<div class="cell" style="left:316.9px;top:524px">Betty's Music Store</div>
<div class="cell" style="left:441px;width:27.4px;text-align:right;top:524px">11887</div>
<div class="cell" style="left:474.3px;top:524px">Betty Yoder</div>
<div class="cell" style="left:564px;width:33.2px;text-align:right;top:524px">536039</div>
<div class="cell" style="left:599px;width:43.3px;text-align:right;top:524px">4/21/2010</div>
<div class="cell" style="left:647.3px;top:524px">DVD</div>
<div class="cell" style="left:669px;width:18.4px;text-align:right;top:524px">6</div>
<div class="cell" style="left:692.7px;top:524px">Gershwin, An American in Paris</div>
<div class="cell" style="left:887.8px;width:3.6px;overflow:hidden;top:524px">A</div>
<div class="a" style="left:298px;top:534.0px;width:593.5px;height:1px;background:#e0e0e0;"></div>
<div class="a" style="left:314.0px;top:406.5px;width:1px;height:129px;background:#e0e0e0;"></div>
<div class="a" style="left:441.0px;top:406.5px;width:1px;height:129px;background:#e0e0e0;"></div>
<div class="a" style="left:471.0px;top:406.5px;width:1px;height:129px;background:#e0e0e0;"></div>
<div class="a" style="left:564.0px;top:406.5px;width:1px;height:129px;background:#e0e0e0;"></div>
<div class="a" style="left:598.5px;top:406.5px;width:1px;height:129px;background:#e0e0e0;"></div>
<div class="a" style="left:644.5px;top:406.5px;width:1px;height:129px;background:#e0e0e0;"></div>
<div class="a" style="left:669.0px;top:406.5px;width:1px;height:129px;background:#e0e0e0;"></div>
<div class="a" style="left:689.5px;top:406.5px;width:1px;height:129px;background:#e0e0e0;"></div>
<div class="a" style="left:885.0px;top:406.5px;width:1px;height:129px;background:#e0e0e0;"></div>
<div class="a" style="left:891.5px;top:386.2px;width:8.5px;height:149px;background:#e9e9e9;"></div>
<div class="a" style="left:891.5px;top:389px;width:8.5px;height:10px;background:#fff;border:1px solid #cdcdcd;"></div>
<svg class="a" style="left:893.5px;top:392.5px" width="5" height="3" viewBox="0 0 5 3"><path d="M0 3L2.5 0L5 3z" fill="#333"/></svg>
<div class="a" style="left:891.5px;top:399px;width:8.5px;height:7px;background:#fff;border:1px solid #cdcdcd;"></div>
<div class="a" style="left:891.5px;top:524.7px;width:8.5px;height:10.5px;background:#fff;border:1px solid #cdcdcd;"></div>
<svg class="a" style="left:893.5px;top:529px" width="5" height="3" viewBox="0 0 5 3"><path d="M0 0L2.5 3L5 0z" fill="#333"/></svg>
<div class="a" style="left:298px;top:535.2px;width:602px;height:9.4px;background:#e9e9e9;"></div>
<div class="a" style="left:298px;top:535.7px;width:11px;height:8.9px;background:#fff;border:1px solid #cdcdcd;"></div>
<svg class="a" style="left:301.8px;top:538px" width="3" height="5" viewBox="0 0 3 5"><path d="M3 0L0 2.5L3 5z" fill="#333"/></svg>
<div class="a" style="left:309px;top:535.7px;width:467px;height:8.9px;background:#fff;border:1px solid #dadada;"></div>
<div class="a" style="left:880.8px;top:535.7px;width:10.2px;height:8.9px;background:#fff;border:1px solid #cdcdcd;"></div>
<svg class="a" style="left:884.7px;top:538px" width="3" height="5" viewBox="0 0 3 5"><path d="M0 0L3 2.5L0 5z" fill="#333"/></svg>
<div class="a" style="left:891px;top:535.2px;width:9px;height:9.4px;background:#fff;"></div>
</body>
</html>
